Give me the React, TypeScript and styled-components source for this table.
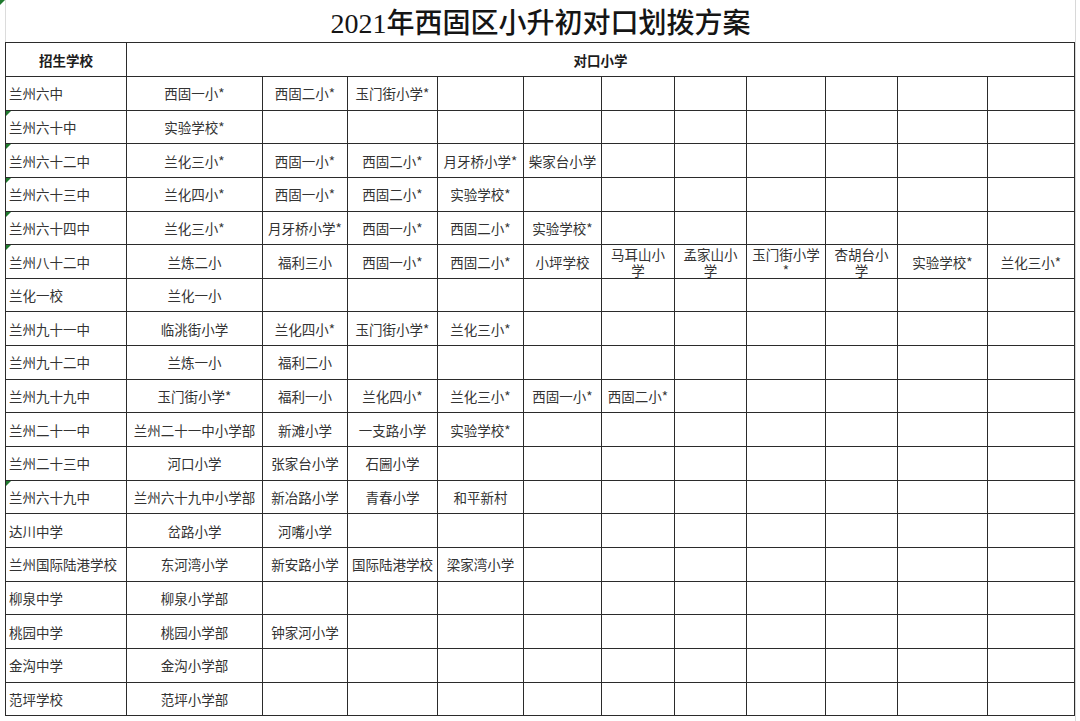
import styled, { createGlobalStyle } from 'styled-components';

const GlobalStyle = createGlobalStyle`
  html, body {
    margin: 0;
    padding: 0;
    background: #ffffff;
  }
  body {
    font-family: 'Noto Sans CJK SC', 'Noto Sans', sans-serif;
    color: #2a2a2a;
  }
`;

const columnWidths = [121, 136, 85, 90, 86, 78, 73, 72, 79, 72, 90, 87];
const FEED_COLUMNS = 11;

type Row = { school: string; flag?: boolean; feeds: string[][] };

// each feed is a list of lines; most cells hold one line
const rows: Row[] = [
  { school: '兰州六中', feeds: [['西固一小*'], ['西固二小*'], ['玉门街小学*']] },
  { school: '兰州六十中', flag: true, feeds: [['实验学校*']] },
  {
    school: '兰州六十二中',
    flag: true,
    feeds: [['兰化三小*'], ['西固一小*'], ['西固二小*'], ['月牙桥小学*'], ['柴家台小学']],
  },
  {
    school: '兰州六十三中',
    flag: true,
    feeds: [['兰化四小*'], ['西固一小*'], ['西固二小*'], ['实验学校*']],
  },
  {
    school: '兰州六十四中',
    flag: true,
    feeds: [['兰化三小*'], ['月牙桥小学*'], ['西固一小*'], ['西固二小*'], ['实验学校*']],
  },
  {
    school: '兰州八十二中',
    flag: true,
    feeds: [
      ['兰炼二小'],
      ['福利三小'],
      ['西固一小*'],
      ['西固二小*'],
      ['小坪学校'],
      ['马耳山小', '学'],
      ['孟家山小', '学'],
      ['玉门街小学', '*'],
      ['杏胡台小', '学'],
      ['实验学校*'],
      ['兰化三小*'],
    ],
  },
  { school: '兰化一校', feeds: [['兰化一小']] },
  {
    school: '兰州九十一中',
    feeds: [['临洮街小学'], ['兰化四小*'], ['玉门街小学*'], ['兰化三小*']],
  },
  { school: '兰州九十二中', feeds: [['兰炼一小'], ['福利二小']] },
  {
    school: '兰州九十九中',
    feeds: [['玉门街小学*'], ['福利一小'], ['兰化四小*'], ['兰化三小*'], ['西固一小*'], ['西固二小*']],
  },
  {
    school: '兰州二十一中',
    feeds: [['兰州二十一中小学部'], ['新滩小学'], ['一支路小学'], ['实验学校*']],
  },
  { school: '兰州二十三中', feeds: [['河口小学'], ['张家台小学'], ['石圌小学']] },
  {
    school: '兰州六十九中',
    flag: true,
    feeds: [['兰州六十九中小学部'], ['新冶路小学'], ['青春小学'], ['和平新村']],
  },
  { school: '达川中学', feeds: [['岔路小学'], ['河嘴小学']] },
  {
    school: '兰州国际陆港学校',
    feeds: [['东河湾小学'], ['新安路小学'], ['国际陆港学校'], ['梁家湾小学']],
  },
  { school: '柳泉中学', feeds: [['柳泉小学部']] },
  { school: '桃园中学', feeds: [['桃园小学部'], ['钟家河小学']] },
  { school: '金沟中学', feeds: [['金沟小学部']] },
  { school: '范坪学校', feeds: [['范坪小学部']] },
];

const Sheet = styled.div`
  position: relative;
  width: 1080px;
  height: 721px;
  overflow: hidden;
  background: #ffffff;

  &::before {
    content: '';
    position: absolute;
    left: 0;
    top: 0;
    border-top: 5px solid #1f7a2e;
    border-right: 5px solid transparent;
  }

  &::after {
    content: '';
    position: absolute;
    left: 1075px;
    top: 0;
    bottom: 0;
    border-left: 1px solid #d8d8d8;
  }
`;

const TitleBar = styled.div`
  height: 42px;
  display: flex;
  align-items: center;
  justify-content: center;
  font-family: 'Liberation Serif', 'Noto Sans CJK SC', serif;
  font-size: 28px;
  font-weight: 500;
  color: #151515;
  box-sizing: border-box;
  border-left: 1px solid #dcdcdc;
  margin-left: 5px;
  width: 1070px;
`;

const Table = styled.table`
  margin-left: 5px;
  border-collapse: collapse;
  table-layout: fixed;
  width: 1069px;
  font-size: 13.5px;
  color: #333333;
`;

const HeaderRow = styled.tr`
  height: 34px;
`;

const BodyRow = styled.tr`
  height: 33.65px;
`;

const HeaderCell = styled.th`
  border: 1px solid #2b2b2b;
  padding: 0;
  font-size: 13.5px;
  font-weight: 700;
  color: #1c1c1c;
  text-align: center;
  vertical-align: middle;
`;

const SchoolCell = styled.td<{ $flag?: boolean }>`
  position: relative;
  border: 1px solid #2b2b2b;
  padding: 0 0 0 3px;
  text-align: left;
  vertical-align: middle;
  white-space: nowrap;

  &::before {
    content: '';
    display: ${({ $flag }) => ($flag ? 'block' : 'none')};
    position: absolute;
    left: 0;
    top: 0;
    border-top: 5px solid #1f7a2e;
    border-right: 5px solid transparent;
  }
`;

const FeedCell = styled.td`
  border: 1px solid #2b2b2b;
  padding: 0;
  text-align: center;
  vertical-align: middle;
  white-space: nowrap;
`;

const FeedLine = styled.div<{ $wrapped?: boolean }>`
  display: block;
  height: ${({ $wrapped }) => ($wrapped ? '16px' : '18px')};
  line-height: ${({ $wrapped }) => ($wrapped ? '16px' : '18px')};
`;

export default function App() {
  return (
    <>
      <GlobalStyle />
      <Sheet>
        <TitleBar>2021年西固区小升初对口划拨方案</TitleBar>
        <Table>
          <colgroup>
            {columnWidths.map((w, i) => (
              <col key={i} style={{ width: w }} />
            ))}
          </colgroup>
          <thead>
            <HeaderRow>
              <HeaderCell>招生学校</HeaderCell>
              <HeaderCell colSpan={FEED_COLUMNS}>对口小学</HeaderCell>
            </HeaderRow>
          </thead>
          <tbody>
            {rows.map((row) => (
              <BodyRow key={row.school}>
                <SchoolCell $flag={row.flag}>{row.school}</SchoolCell>
                {Array.from({ length: FEED_COLUMNS }, (_, i) => {
                  const lines = row.feeds[i] ?? [];
                  return (
                    <FeedCell key={i}>
                      {lines.map((line, j) => (
                        <FeedLine key={j} $wrapped={lines.length > 1}>
                          {line}
                        </FeedLine>
                      ))}
                    </FeedCell>
                  );
                })}
              </BodyRow>
            ))}
          </tbody>
        </Table>
      </Sheet>
    </>
  );
}
